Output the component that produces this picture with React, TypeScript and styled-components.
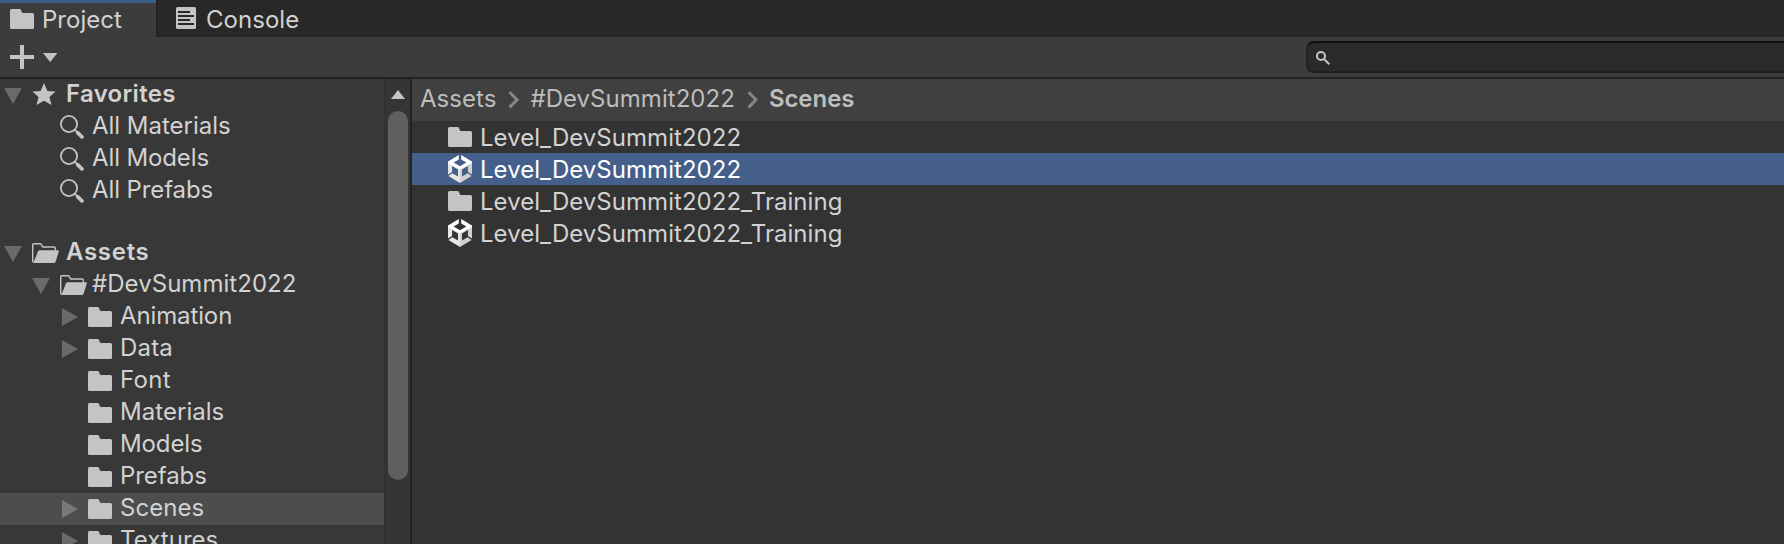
import React from 'react';
import styled, { createGlobalStyle } from 'styled-components';

const GlobalStyle = createGlobalStyle`
  * { box-sizing: border-box; }
  body {
    margin: 0;
    background: #333333;
    font-family: Inter, "Liberation Sans", sans-serif;
    font-size: 24px;
    letter-spacing: 0.04px;
    color: #d2d2d2;
    overflow: hidden;
  }
  svg { display: block; flex: none; overflow: visible; }
`;

const Window = styled.div`
  display: flex;
  flex-direction: column;
  width: 100%;
  height: 544px;
  overflow: hidden;
  white-space: nowrap;
`;

const TabBar = styled.div`
  display: flex;
  height: 37px;
  background: #282828;
`;

const Tab = styled.div<{ $active?: boolean }>`
  display: flex;
  gap: ${p => (p.$active ? 8 : 10)}px;
  height: 37px;
  line-height: 40px;
  width: ${p => (p.$active ? '156px' : 'auto')};
  flex: ${p => (p.$active ? 'none' : '1')};
  padding-left: ${p => (p.$active ? 10 : 20)}px;
  background: ${p => (p.$active ? '#3c3c3c' : '#282828')};
  box-shadow: ${p => (p.$active ? 'inset 0 3px #3a5f8b' : 'inset 2px -2px #232323')};
  svg { margin-top: ${p => (p.$active ? 9 : 7)}px; }
`;

const Toolbar = styled.div`
  display: flex;
  height: 42px;
  padding-left: 10px;
  background: #3c3c3c;
  border-bottom: 2px solid #232323;
`;

const AddButton = styled.div`
  display: flex;
  gap: 9px;
  padding-top: 8px;
`;

const SearchField = styled.div`
  width: 486px;
  height: 32px;
  margin: 4px -8px 0 auto;
  padding: 8px 0 0 8px;
  background: #2a2a2a;
  border: 2px solid #212121;
  border-top-color: #0d0d0d;
  border-radius: 8px;
`;

const Body = styled.div`
  display: flex;
  flex: 1;
  min-height: 0;
`;

const Sidebar = styled.div`
  width: 384px;
  background: #383838;
  overflow: hidden;
`;

const TreeRow = styled.div<{ $depth: number; $selected?: boolean; $gapAfter?: boolean }>`
  display: flex;
  height: 32px;
  margin-bottom: ${p => (p.$gapAfter ? 30 : 0)}px;
  padding-left: ${p => p.$depth * 28 + 4}px;
  background: ${p => (p.$selected ? '#4d4d4d' : 'transparent')};
`;

const Foldout = styled.span`
  width: 28px;
  flex: none;
`;

const TreeIcon = styled.span<{ $top: number }>`
  width: 24px;
  flex: none;
  padding-top: ${p => p.$top}px;
`;

const TreeLabel = styled.span<{ $bold?: boolean; $tracking?: number }>`
  padding-left: ${p => (p.$bold ? 10 : 8)}px;
  line-height: 30px;
  font-weight: ${p => (p.$bold ? 600 : 400)};
  letter-spacing: ${p => p.$tracking ?? 0.04}px;
`;

const ScrollBar = styled.div`
  display: flex;
  flex-direction: column;
  width: 26px;
  padding: 11px 2px 0 2px;
  background: #353535;
  border-left: 2px solid #313131;
`;

const ScrollThumb = styled.div`
  width: 20px;
  height: 369px;
  margin-top: 12px;
  border-radius: 10px;
  background: #5f5f5f;
`;

const Content = styled.div`
  flex: 1;
  min-width: 0;
  border-left: 2px solid #232323;
  background: #333333;
`;

const Breadcrumbs = styled.div`
  display: flex;
  height: 42px;
  padding-left: 8px;
  line-height: 40px;
  background: #404040;
  color: #bdbdbd;
  svg { margin: 12px 11px 0 12px; }
`;

const CurrentCrumb = styled.span`
  font-weight: 600;
  letter-spacing: -0.05px;
`;

const AssetRow = styled.div<{ $selected?: boolean }>`
  display: flex;
  gap: 8px;
  height: 32px;
  padding-left: 36px;
  line-height: 34px;
  color: ${p => (p.$selected ? '#ffffff' : '#d2d2d2')};
  background: ${p => (p.$selected ? '#455f8b' : 'transparent')};
`;

const AssetIcon = styled.span<{ $top: number }>`
  padding-top: ${p => p.$top}px;
`;

const FolderIcon = () => (
  <svg width="24" height="20" viewBox="0 0 24 20" fill="#c4c4c4">
    <path d="M1.5 0H9.6Q10.6 0 11 .9L12.3 4H22.5Q24 4 24 5.5V18.5Q24 20 22.5 20H1.5Q0 20 0 18.5V1.5Q0 0 1.5 0Z" />
  </svg>
);

const OpenFolderIcon = () => (
  <svg width="27" height="20" viewBox="0 0 27 20">
    <path d="M1.6 19.3Q.7 19.3 .7 18V1.7Q.7 .7 1.7 .7H8.3Q9 .7 9.3 1.4L10.7 4H22.3Q23.3 4 23.3 5V7.5" fill="none" stroke="#c4c4c4" strokeWidth="1.4" />
    <path d="M7.6 7.3H26Q27.2 7.3 26.8 8.5L23.6 18.7Q23.2 20 22 20H1.3L5.9 8.5Q6.4 7.3 7.6 7.3Z" fill="#c4c4c4" />
  </svg>
);

const StarIcon = () => (
  <svg width="24" height="22" viewBox="0 0 24 22">
    <path d="M12 0L15.4 7.9L23.6 8.5L17.4 13.9L19.5 22L12 17.7L4.5 22L6.6 13.9L.4 8.5L8.6 7.9Z" fill="#c4c4c4" />
  </svg>
);

const QueryIcon = () => (
  <svg width="24" height="24" viewBox="0 0 24 24" fill="none" stroke="#c4c4c4">
    <circle cx="9" cy="9" r="8.1" strokeWidth="1.8" />
    <path d="M14.6 14.6L17.5 17.5" strokeWidth="1.8" />
    <path d="M17.8 17.8L22 22" strokeWidth="3.8" strokeLinecap="round" />
  </svg>
);

const DownArrow = () => (
  <svg width="18" height="32" viewBox="0 0 18 32">
    <path d="M0 9H18L9 25Z" fill="#fff" fillOpacity=".25" />
  </svg>
);

const RightArrow = () => (
  <svg width="18" height="32" viewBox="0 0 18 32">
    <path d="M2 7V25L18 16Z" fill="#fff" fillOpacity=".25" />
  </svg>
);

const ConsoleIcon = () => (
  <svg width="20" height="22" viewBox="0 0 20 22">
    <rect width="20" height="22" rx="1.5" fill="#c4c4c4" />
    <path d="M2 5H14M2 9H18M2 13H14M2 17H18" stroke="#282828" strokeWidth="2" />
  </svg>
);

const PlusIcon = () => (
  <svg width="24" height="24" viewBox="0 0 24 24">
    <path d="M12 0V24M0 12H24" stroke="#c4c4c4" strokeWidth="4" />
  </svg>
);

const MenuArrow = () => (
  <svg width="15" height="24" viewBox="0 0 15 24">
    <path d="M0 8H14.4L7.2 17Z" fill="#c4c4c4" />
  </svg>
);

const SearchIcon = () => (
  <svg width="14" height="14" viewBox="0 0 14 14" fill="none" stroke="#c4c4c4" strokeWidth="2">
    <circle cx="5" cy="5" r="4" />
    <path d="M8 8L13.3 13.3" />
  </svg>
);

const ScrollUpArrow = () => (
  <svg width="20" height="9" viewBox="0 0 20 9">
    <path d="M10 0L17 9H3Z" fill="#c4c4c4" />
  </svg>
);

const Chevron = () => (
  <svg width="11" height="18" viewBox="0 0 11 18">
    <path d="M1.6 1.2L9 8.8L1.6 16.4" fill="none" stroke="#868686" strokeWidth="3" />
  </svg>
);

/* Open cube: left face, right face, then the bright top ring. */
const SceneIcon = () => (
  <svg width="24" height="28" viewBox="0 0 24 28">
    <path d="M0 7V19.5L4.1 17V11.1L10 14.6V21.4L4.3 18.3L.4 21L12 28V14Z" fill="#e6e6e6" />
    <path d="M24 7V19.5L19.9 17V11.1L14 14.6V21.4L19.7 18.3L23.6 21L12 28V14Z" fill="#d0d0d0" />
    <path d="M10.8 0V4.6L5.6 7.6L12 11.2L18.4 7.6L13.2 4.6V0L24 6.4V8L12 14.6L0 8V6.4Z" fill="#fff" />
  </svg>
);

type IconKind = 'folder' | 'open' | 'star' | 'query';
const ICONS: Record<IconKind, { top: number; Icon: React.FC }> = {
  folder: { top: 6, Icon: FolderIcon },
  open: { top: 6, Icon: OpenFolderIcon },
  star: { top: 4, Icon: StarIcon },
  query: { top: 4, Icon: QueryIcon },
};

type Node = {
  label: string;
  depth: number;
  icon: IconKind;
  fold?: 'down' | 'right';
  bold?: boolean;
  tracking?: number;
  selected?: boolean;
  gapAfter?: boolean;
};

const TREE: Node[] = [
  { label: 'Favorites', depth: 0, icon: 'star', fold: 'down', bold: true, tracking: 0.3 },
  { label: 'All Materials', depth: 1, icon: 'query', tracking: -0.02 },
  { label: 'All Models', depth: 1, icon: 'query', tracking: -0.12 },
  { label: 'All Prefabs', depth: 1, icon: 'query', tracking: -0.1, gapAfter: true },
  { label: 'Assets', depth: 0, icon: 'open', fold: 'down', bold: true, tracking: 0.7 },
  { label: '#DevSummit2022', depth: 1, icon: 'open', fold: 'down' },
  { label: 'Animation', depth: 2, icon: 'folder', fold: 'right', tracking: -0.12 },
  { label: 'Data', depth: 2, icon: 'folder', fold: 'right', tracking: 0.2 },
  { label: 'Font', depth: 2, icon: 'folder', tracking: 0.3 },
  { label: 'Materials', depth: 2, icon: 'folder' },
  { label: 'Models', depth: 2, icon: 'folder', tracking: -0.1 },
  { label: 'Prefabs', depth: 2, icon: 'folder', tracking: -0.08 },
  { label: 'Scenes', depth: 2, icon: 'folder', fold: 'right', selected: true },
  { label: 'Textures', depth: 2, icon: 'folder', fold: 'right' },
];

const ASSETS = [
  { label: 'Level_DevSummit2022', scene: false, selected: false },
  { label: 'Level_DevSummit2022', scene: true, selected: true },
  { label: 'Level_DevSummit2022_Training', scene: false, selected: false },
  { label: 'Level_DevSummit2022_Training', scene: true, selected: false },
];

export default function App() {
  return (
    <Window>
      <GlobalStyle />
      <TabBar>
        <Tab $active><FolderIcon />Project</Tab>
        <Tab><ConsoleIcon />Console</Tab>
      </TabBar>
      <Toolbar>
        <AddButton><PlusIcon /><MenuArrow /></AddButton>
        <SearchField><SearchIcon /></SearchField>
      </Toolbar>
      <Body>
        <Sidebar>
          {TREE.map(n => {
            const { top, Icon } = ICONS[n.icon];
            return (
              <TreeRow key={n.label} $depth={n.depth} $selected={n.selected} $gapAfter={n.gapAfter}>
                <Foldout>
                  {n.fold === 'down' && <DownArrow />}
                  {n.fold === 'right' && <RightArrow />}
                </Foldout>
                <TreeIcon $top={top}><Icon /></TreeIcon>
                <TreeLabel $bold={n.bold} $tracking={n.tracking}>{n.label}</TreeLabel>
              </TreeRow>
            );
          })}
        </Sidebar>
        <ScrollBar>
          <ScrollUpArrow />
          <ScrollThumb />
        </ScrollBar>
        <Content>
          <Breadcrumbs>
            <span>Assets</span>
            <Chevron />
            <span>#DevSummit2022</span>
            <Chevron />
            <CurrentCrumb>Scenes</CurrentCrumb>
          </Breadcrumbs>
          {ASSETS.map((a, i) => (
            <AssetRow key={i} $selected={a.selected}>
              <AssetIcon $top={a.scene ? 2 : 6}>{a.scene ? <SceneIcon /> : <FolderIcon />}</AssetIcon>
              {a.label}
            </AssetRow>
          ))}
        </Content>
      </Body>
    </Window>
  );
}
